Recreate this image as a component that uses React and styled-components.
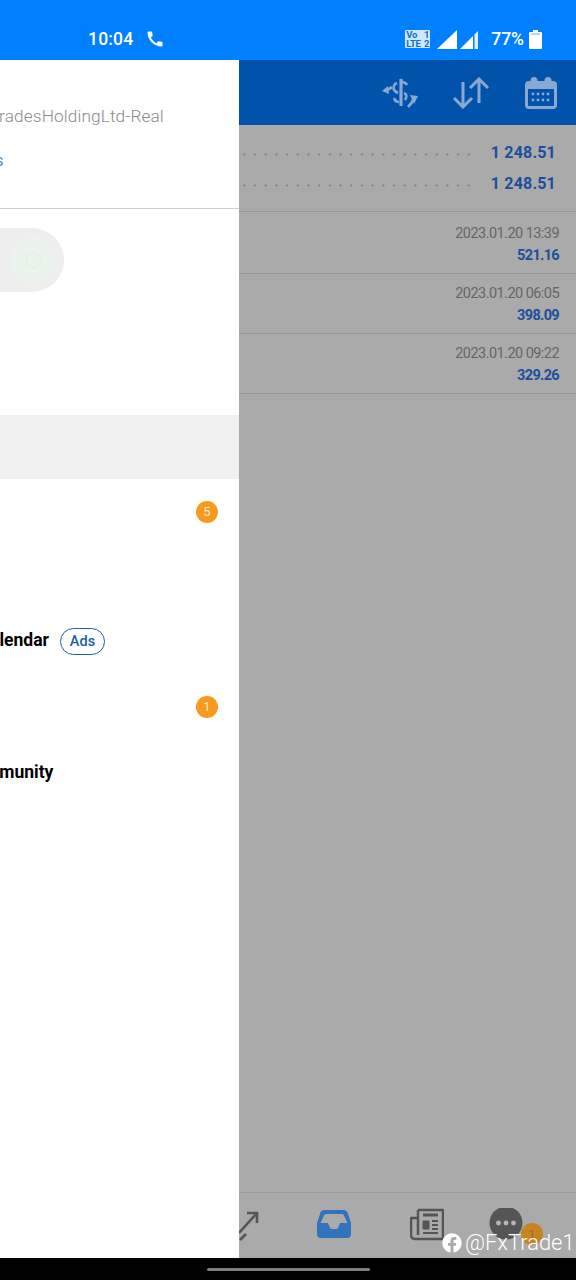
import React from "react";
import styled, { createGlobalStyle } from "styled-components";
import { MdCall } from "react-icons/md";
import { FaFacebook } from "react-icons/fa";

const GlobalStyle = createGlobalStyle`
  html, body {
    margin: 0;
    padding: 0;
    background: #000;
  }
  body {
    font-family: Roboto, "Liberation Sans", sans-serif;
  }
`;

const Screen = styled.div`
  position: relative;
  width: 576px;
  height: 1280px;
  display: flex;
  flex-direction: column;
  overflow: hidden;
`;

const StatusBar = styled.div`
  height: 60px;
  flex-shrink: 0;
  background: #0080ff;
  color: #fff;
  display: flex;
  align-items: center;
  padding: 18px 34px 0 88px;
  box-sizing: border-box;
`;
const Time = styled.span`
  font-size: 17.5px;
  font-weight: 500;
  letter-spacing: 0.2px;
`;
const CallIcon = styled(MdCall)`
  width: 20px;
  height: 20px;
  margin-left: 12px;
`;
const StatusRight = styled.div`
  margin-left: auto;
  display: flex;
  align-items: center;
`;
const VolteBox = styled.div`
  width: 25px;
  height: 18px;
  background: #cfe8ff;
  color: #0a6fd8;
  border-radius: 1px;
  display: grid;
  grid-template-columns: 1fr auto;
  font-size: 9.5px;
  font-weight: 700;
  line-height: 9px;
  letter-spacing: -0.3px;
  padding: 0 1px;
  box-sizing: border-box;
  margin-right: 7px;
  white-space: nowrap;
`;
const Signal = styled.svg`
  width: ${(props) => props.$w}px;
  height: 19px;
  margin-right: ${(props) => props.$gap}px;
`;
const BatteryLevel = styled.span`
  font-size: 17.5px;
  font-weight: 500;
  margin: 0 5px 0 13px;
`;
const BatteryIcon = styled.svg`
  width: 13px;
  height: 19px;
`;

const Main = styled.div`
  flex: 1;
  min-height: 0;
  display: flex;
`;

const Drawer = styled.aside`
  width: 239px;
  flex-shrink: 0;
  background: #fff;
  overflow: hidden;
`;
const DrawerInner = styled.div`
  width: 479px;
  margin-left: -240px;
`;
const Account = styled.div`
  height: 149px;
  box-sizing: border-box;
  border-bottom: 1px solid #cfcfcf;
  padding: 44px 0 0 176px;
`;
const Server = styled.div`
  padding-left: 35px;
  font-size: 17.3px;
  font-weight: 300;
  line-height: 24px;
  color: #8a8a8a;
  letter-spacing: 0.1px;
  white-space: nowrap;
`;
const AccountLink = styled.div`
  margin-top: 23px;
  font-size: 16px;
  line-height: 20px;
  color: #4a8fc4;
`;
const ToggleArea = styled.div`
  height: 206px;
  box-sizing: border-box;
  padding-top: 19px;
`;
const TogglePill = styled.div`
  width: 304px;
  height: 64px;
  border-radius: 32px;
  background: #eeeeee;
  display: flex;
  justify-content: flex-end;
  align-items: center;
  padding-right: 8px;
  box-sizing: border-box;
`;
const ToggleKnob = styled.div`
  width: 46px;
  height: 46px;
  border-radius: 50%;
  background: radial-gradient(circle, #e9f4eb 0%, #ebf3ec 50%, #eeeeee 100%);
  display: flex;
  align-items: center;
  justify-content: center;
`;
const KnobMark = styled.div`
  width: 13px;
  height: 13px;
  border-radius: 50%;
  border: 2px solid #e3f1e6;
`;
const Band = styled.div`
  height: 64px;
  background: #f1f1f1;
`;
const MenuRow = styled.div`
  height: 65px;
  display: flex;
  align-items: center;
  padding: 0 21px 0 ${(props) => props.$left || 150}px;
  box-sizing: border-box;
`;
const MenuLabel = styled.span`
  font-size: 17.5px;
  font-weight: 700;
  color: #000;
  white-space: nowrap;
  margin-top: ${(props) => props.$lift || 0}px;
`;
const AdsTag = styled.span`
  margin-left: 11px;
  width: 45px;
  height: 27px;
  box-sizing: border-box;
  border: 1.5px solid #1c5ea8;
  border-radius: 14px;
  color: #1c5ea8;
  font-size: 14.5px;
  font-weight: 500;
  display: flex;
  align-items: center;
  justify-content: center;
`;
const Badge = styled.span`
  margin-left: auto;
  width: 22px;
  height: 22px;
  border-radius: 50%;
  background: #f79a1e;
  color: #ffe9c8;
  font-size: 13px;
  display: flex;
  align-items: center;
  justify-content: center;
`;

const Content = styled.div`
  flex: 1;
  min-width: 0;
  background: #aaaaaa;
  display: flex;
  flex-direction: column;
`;
const Header = styled.div`
  height: 65px;
  flex-shrink: 0;
  background: #0152ab;
  display: flex;
  align-items: center;
  justify-content: flex-end;
  padding-right: 19px;
  gap: 36px;
  color: #8aa9d2;
`;
const Summary = styled.div`
  height: 87px;
  flex-shrink: 0;
  box-sizing: border-box;
  border-bottom: 1px solid #979797;
  padding: 12px 20px 0 0;
`;
const SummaryRow = styled.div`
  height: 31px;
  display: flex;
  align-items: center;
`;
const Dots = styled.div`
  flex: 1;
  height: 3px;
  margin: 4px ${(props) => props.$end}px 0 0;
  background-image: radial-gradient(circle, #8b8b8b 1px, transparent 1.4px);
  background-size: 10.7px 3px;
`;
const Total = styled.span`
  font-size: 16px;
  font-weight: 700;
  color: #1b4f9c;
  letter-spacing: 0.2px;
`;
const Deals = styled.div`
  padding-top: 2px;
`;
const DealRow = styled.div`
  height: 60px;
  box-sizing: border-box;
  border-bottom: 1px solid #979797;
  padding: 10px 17px 0 0;
  text-align: right;
`;
const DealDate = styled.div`
  font-size: 14.5px;
  line-height: 20px;
  color: #666666;
  letter-spacing: -0.55px;
`;
const DealValue = styled.div`
  font-size: 14.5px;
  line-height: 23px;
  font-weight: 700;
  color: #1b4f9c;
  letter-spacing: -0.65px;
`;
const Spacer = styled.div`
  flex: 1;
`;
const BottomNav = styled.div`
  height: 66px;
  flex-shrink: 0;
  box-sizing: border-box;
  border-top: 1px solid #9c9c9c;
  display: flex;
  align-items: flex-start;
  padding-top: 15px;
  position: relative;
`;
const NavIcon = styled.svg`
  width: ${(props) => props.$w}px;
  height: 34px;
  margin-left: ${(props) => props.$left}px;
  flex-shrink: 0;
`;
const ChatBadge = styled.span`
  position: absolute;
  left: 282px;
  top: 30px;
  width: 22px;
  height: 22px;
  border-radius: 50%;
  background: #c8841f;
  color: #a96c12;
  font-size: 13px;
  display: flex;
  align-items: center;
  justify-content: center;
`;

const NavBar = styled.div`
  height: 22px;
  flex-shrink: 0;
  background: #000;
  display: flex;
  justify-content: center;
  align-items: center;
`;
const HomePill = styled.div`
  width: 163px;
  height: 3px;
  border-radius: 2px;
  background: #7d7d7d;
  margin-left: 1px;
`;

const Watermark = styled.div`
  position: absolute;
  left: 442px;
  top: 1230px;
  display: flex;
  align-items: center;
  gap: 3px;
  color: #fff;
  font-size: 21.9px;
  font-weight: 300;
  line-height: 26px;
`;
const FbIcon = styled(FaFacebook)`
  width: 20px;
  height: 20px;
`;
const ExchangeSvg = styled.svg`
  width: 36px;
  height: 32px;
  overflow: visible;
`;

const ExchangeIcon = () => (
  <ExchangeSvg viewBox="0 0 36 32" fill="none" stroke="currentColor" strokeWidth="2.6">
    <path d="M20 2v27" strokeWidth="3.2" />
    <path d="M20 5c3 0 5 1 6 3" />
    <path d="M16 6c-3 1-4 4-3 7 1 1 2 2 4 3" />
    <path d="M23 16c3 1 3 4 1 7" />
    <path d="M13 21c1 3 3 4 5 4" />
    <path d="M1 14l6-5 1 8z" fill="currentColor" stroke="none" />
    <path d="M6 13c2-1 4-2 5-3" />
    <path d="M37 19l-8-1 4 9z" fill="currentColor" stroke="none" />
    <path d="M32 23c-1 3-3 5-5 7" />
  </ExchangeSvg>
);

const SortIcon = () => (
  <svg width="36" height="32" viewBox="0 0 36 32" fill="none" stroke="currentColor" strokeWidth="3">
    <path d="M10 5v25M1 21l9 9 9-9" />
    <path d="M26 26V2M17 11l9-9 9 9" />
  </svg>
);

const CalendarIcon = () => (
  <svg width="32" height="33" viewBox="0 0 32 33">
    <rect x="1.5" y="6.5" width="29" height="25" rx="2.5" fill="none" stroke="currentColor" strokeWidth="3" />
    <rect x="1.5" y="7" width="29" height="6" fill="currentColor" />
    <circle cx="9" cy="4.5" r="3.5" fill="currentColor" />
    <circle cx="23" cy="4.5" r="3.5" fill="currentColor" />
    {[8, 13, 18, 23].map((x) =>
      [18, 24].map((y) => <circle key={`${x}-${y}`} cx={x} cy={y} r="1.4" fill="currentColor" />)
    )}
  </svg>
);

function App() {
  return (
    <Screen>
      <GlobalStyle />
      <StatusBar>
        <Time>10:04</Time>
        <CallIcon />
        <StatusRight>
          <VolteBox>
            <span>Vo</span>
            <span>1</span>
            <span>LTE</span>
            <span>2</span>
          </VolteBox>
          <Signal viewBox="0 0 20 19" $w={20} $gap={3}>
            <polygon points="0,19 20,0 20,19" fill="#fff" />
          </Signal>
          <Signal viewBox="0 0 18 19" $w={18} $gap={0}>
            <polygon points="0,19 13,6 13,19" fill="#fff" />
            <polygon points="14.5,4.5 18,1 18,19 14.5,19" fill="#dff0ff" />
          </Signal>
          <BatteryLevel>77%</BatteryLevel>
          <BatteryIcon viewBox="0 0 13 19">
            <path d="M4 0h5v2h3a1 1 0 0 1 1 1v15a1 1 0 0 1-1 1H1a1 1 0 0 1-1-1V3a1 1 0 0 1 1-1h3z" fill="#fff" />
            <rect x="2" y="3.5" width="9" height="1.2" fill="#7fbfff" />
          </BatteryIcon>
        </StatusRight>
      </StatusBar>

      <Main>
        <Drawer>
          <DrawerInner>
            <Account>
              <Server>FxTradesHoldingLtd-Real</Server>
              <AccountLink>Accounts</AccountLink>
            </Account>
            <ToggleArea>
              <TogglePill>
                <ToggleKnob>
                  <KnobMark />
                </ToggleKnob>
              </TogglePill>
            </ToggleArea>
            <Band />
            <MenuRow>
              <Badge>5</Badge>
            </MenuRow>
            <MenuRow />
            <MenuRow $left={137}>
              <MenuLabel $lift={-3}>Economic Calendar</MenuLabel>
              <AdsTag>Ads</AdsTag>
            </MenuRow>
            <MenuRow>
              <Badge>1</Badge>
            </MenuRow>
            <MenuRow $left={138}>
              <MenuLabel>Traders Community</MenuLabel>
            </MenuRow>
          </DrawerInner>
        </Drawer>

        <Content>
          <Header>
            <ExchangeIcon />
            <SortIcon />
            <CalendarIcon />
          </Header>
          <Summary>
            <SummaryRow>
              <Dots $end={20} />
              <Total>1 248.51</Total>
            </SummaryRow>
            <SummaryRow>
              <Dots $end={13} />
              <Total>1 248.51</Total>
            </SummaryRow>
          </Summary>
          <Deals>
            <DealRow>
              <DealDate>2023.01.20 13:39</DealDate>
              <DealValue>521.16</DealValue>
            </DealRow>
            <DealRow>
              <DealDate>2023.01.20 06:05</DealDate>
              <DealValue>398.09</DealValue>
            </DealRow>
            <DealRow>
              <DealDate>2023.01.20 09:22</DealDate>
              <DealValue>329.26</DealValue>
            </DealRow>
          </Deals>
          <Spacer />
          <BottomNav>
            <NavIcon viewBox="0 0 20 34" $w={20} $left={0} fill="none" stroke="#555" strokeWidth="2.6">
              <path d="M0 25L17 6" />
              <path d="M8 5h10v10" />
              <path d="M1 32l6-6" />
            </NavIcon>
            <NavIcon viewBox="0 0 34 34" $w={34} $left={58} fill="#2f74bd">
              <path
                fillRule="evenodd"
                d="M8 2h18a5 5 0 0 1 5 4l3 9v11a4 4 0 0 1-4 4H4a4 4 0 0 1-4-4V15l3-9a5 5 0 0 1 5-4zm1 4a2 2 0 0 0-2 1.500L3.500 15H11l2 5a2 2 0 0 0 2 1h4a2 2 0 0 0 2-1l2-5h7.500L27 7.500A2 2 0 0 0 25 6z"
              />
            </NavIcon>
            <NavIcon viewBox="0 0 34 34" $w={34} $left={59} fill="none" stroke="#555" strokeWidth="2.5" strokeLinejoin="round">
              <path d="M8 2h25v29H5a4 4 0 0 1-4-4V10h7" />
              <path d="M8 2v25" />
              <path d="M13 7h15" strokeWidth="3" />
              <rect x="13" y="13" width="6" height="8" fill="#555" strokeWidth="1" />
              <path d="M22 13h6M22 17h6M22 21h6M13 25h15" strokeWidth="2" />
            </NavIcon>
            <NavIcon viewBox="0 0 34 34" $w={34} $left={45}>
              <circle cx="17" cy="15" r="16.5" fill="#555" />
              <circle cx="9.500" cy="15" r="2.400" fill="#b5b5b5" />
              <circle cx="17" cy="15" r="2.400" fill="#b5b5b5" />
              <circle cx="24.500" cy="15" r="2.400" fill="#b5b5b5" />
            </NavIcon>
            <ChatBadge>1</ChatBadge>
          </BottomNav>
        </Content>
      </Main>

      <NavBar>
        <HomePill />
      </NavBar>

      <Watermark>
        <FbIcon />
        <span>@FxTrade1</span>
      </Watermark>
    </Screen>
  );
}

export default App;
